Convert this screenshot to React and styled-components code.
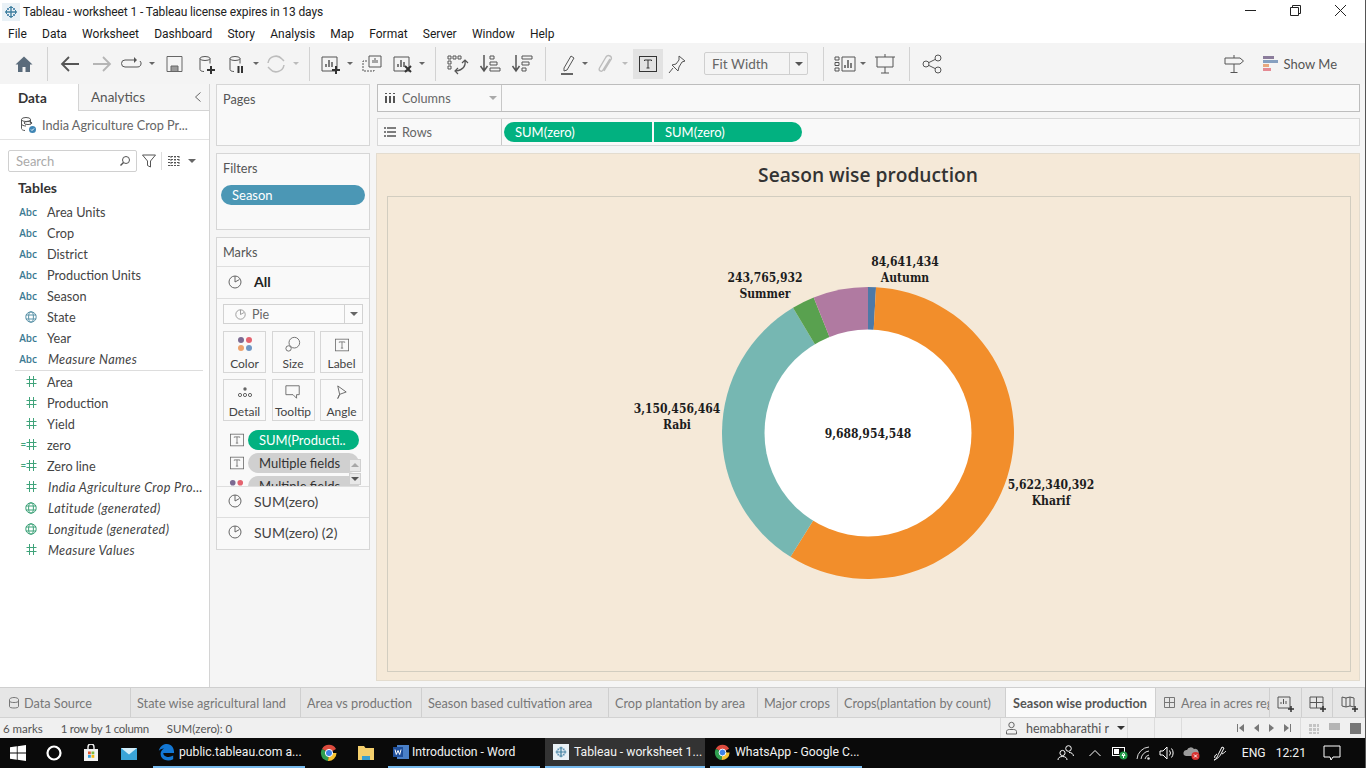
import React from 'react';
import styled, { createGlobalStyle } from 'styled-components';

const UI = 'Roboto, "Open Sans", "Liberation Sans", sans-serif';
const TB = 'Lato, "Open Sans", sans-serif';

const Global = createGlobalStyle`
  html, body { margin: 0; padding: 0; height: 100%; overflow: hidden; background: #fff; }
  * { box-sizing: border-box; }
  #root { height: 768px; }
`;

/* ---------- icons ---------- */
const Svg = styled.svg`
  display: block;
  flex: none;
  fill: none;
  stroke: ${(p) => p.$c || '#555'};
  stroke-width: 1;
`;

const Logo = ({ size = 18 }) => (
  <Svg $c="#3f7f9f" width={size} height={size} viewBox="0 0 18 18">
    <rect x="0" y="0" width="18" height="18" fill="#e9f1f6" stroke="none" />
    <path d="M9 3v12M3 9h12" strokeWidth="1.400" />
    <path d="M7 4.500h4M7 13.500h4M4.500 7v4M13.500 7v4" />
    <path d="M5 5h2v2H5zM11 5h2v2h-2zM5 11h2v2H5zM11 11h2v2h-2z" stroke="none" fill="#5f93b5" />
  </Svg>
);

const Home = () => (
  <Svg width="24" height="24" viewBox="0 0 24 24">
    <path d="M12 4.500 3.500 12.500H6V20h4.500v-5h3v5H18v-7.500h2.500z" fill="#5a6b7b" stroke="none" />
  </Svg>
);
const Back = () => (
  <Svg width="24" height="24" viewBox="0 0 24 24">
    <path d="M21 12H4M11 5l-7 7 7 7" strokeWidth="1.800" />
  </Svg>
);
const Forward = () => (
  <Svg $c="#b5b5b5" width="24" height="24" viewBox="0 0 24 24">
    <path d="M3 12h17M13 5l7 7-7 7" strokeWidth="1.800" />
  </Svg>
);
const Loop = () => (
  <Svg width="24" height="24" viewBox="0 0 24 24">
    <path d="M15 8H6a3.500 3.500 0 0 0 0 7h12a3.500 3.500 0 0 0 3-6" />
    <path d="M15 5l3 3-3 3" fill="#555" stroke="none" />
  </Svg>
);
const Save = () => (
  <Svg $c="#666" width="24" height="24" viewBox="0 0 24 24">
    <path d="M5 4.500h15v15H5z" />
    <path d="M9 19v-5h7v5" fill="#999" />
  </Svg>
);
const Db = ({ badge }) => (
  <Svg width="24" height="24" viewBox="0 0 24 24">
    <ellipse cx="11" cy="6.500" rx="5" ry="2" />
    <path d="M6 6.500v11c0 1 1.500 2 4 2M16 6.500v5" />
    {badge === 'plus' && <path d="M17 14v8M13 18h8" stroke="#333" strokeWidth="2" />}
    {badge === 'pause' && <path d="M14.500 14v7M18 14v7" stroke="#333" strokeWidth="2" />}
  </Svg>
);
const Refresh = () => (
  <Svg $c="#bdbdbd" width="24" height="24" viewBox="0 0 24 24">
    <path d="M4 11a8 8 0 0 1 14-4l2 2M20 13a8 8 0 0 1-14 4l-2-2" strokeWidth="1.500" />
  </Svg>
);
const Bars = ({ badge }) => (
  <Svg width="24" height="24" viewBox="0 0 24 24">
    <path d="M3 5h15v14H3z" />
    <path d="M7 15v-3M10 15V8M13 15v-5" strokeWidth="1.500" />
    {badge === 'plus' && <path d="M17 14v8M13 18h8" stroke="#333" strokeWidth="2" />}
    {badge === 'x' && <path d="M14 14l6 6M20 14l-6 6" stroke="#333" strokeWidth="2" />}
  </Svg>
);
const DupSheet = () => (
  <Svg width="24" height="24" viewBox="0 0 24 24">
    <path d="M9 4h12v11H9z" />
    <path d="M13 11V8M15 11V6M17 11V8" />
    <path d="M7 9H3v10h11v-2" strokeDasharray="2 1" />
  </Svg>
);
const Swap = () => (
  <Svg width="24" height="24" viewBox="0 0 24 24">
    <path d="M3 4h3v3H3zM8 4h3v3H8zM13 4h3v3h-3zM3 9h3v3H3zM3 14h3v3H3z" />
    <path d="M20 9c1 5-2 9-9 10M13 16l-3 3 3 3M17 11l3-3 3 3" strokeWidth="1.200" />
  </Svg>
);
const Sort = ({ desc }) => (
  <Svg width="24" height="24" viewBox="0 0 24 24">
    <path d="M6 3v15M2.500 14 6 19l3.500-5" strokeWidth="1.500" />
    {desc ? (
      <path d="M12 4h10v3H12zM12 10h7v3h-7zM12 16h4v3h-4z" />
    ) : (
      <path d="M12 4h4v3h-4zM12 10h7v3h-7zM12 16h10v3H12z" />
    )}
  </Svg>
);
const Pen = () => (
  <Svg width="24" height="24" viewBox="0 0 24 24">
    <path d="M8 16 15 4l3 2-7 12-3 1z" />
    <path d="M5 22h12" strokeWidth="1.800" />
  </Svg>
);
const Clip = () => (
  <Svg $c="#bdbdbd" width="24" height="24" viewBox="0 0 24 24">
    <path d="M17 7 10 18c-1.500 2.500-5 .5-3.500-2L13 5c2-3 7-.5 5 2.500L11 19" strokeWidth="1.400" />
  </Svg>
);
const TextBox = ({ small }) => (
  <Svg $c={small ? '#666' : '#333'} width={small ? 14 : 18} height={small ? 14 : 16} viewBox="0 0 18 16">
    <rect x="0.500" y="0.500" width="17" height="15" />
    <path d="M5.500 5V4h7v1M9 4v8M7.500 12h3" />
  </Svg>
);
const Pin = () => (
  <Svg width="24" height="24" viewBox="0 0 24 24">
    <path d="M14 4l6 5-3 1-3 5-1 4-6-6 4-1 3-4zM8 16l-4 5" />
  </Svg>
);
const ShowSheets = () => (
  <Svg width="24" height="24" viewBox="0 0 24 24">
    <path d="M2 5h4v3H2zM2 10.500h4v3H2zM2 16h4v3H2zM9 5h13v14H9z" />
    <path d="M12 16v-3M15 16V8M18 16v-5" strokeWidth="1.500" />
  </Svg>
);
const Present = () => (
  <Svg width="24" height="24" viewBox="0 0 24 24">
    <path d="M2 5h20M4 5v10h16V5M12 15v6M8 21h8M12 2v3" />
  </Svg>
);
const Share = () => (
  <Svg width="24" height="24" viewBox="0 0 24 24">
    <circle cx="6" cy="12" r="3" />
    <circle cx="18" cy="6" r="3" />
    <circle cx="18" cy="18" r="3" />
    <path d="M9 10.500 15 7.500M9 13.500l6 3" />
  </Svg>
);
const Guide = () => (
  <Svg width="22" height="24" viewBox="0 0 22 24">
    <path d="M2 6h15l3.500 3-3.500 3H2zM11 3v3M11 12v8M7.500 20.500h7" />
  </Svg>
);
const ShowMeIcon = () => (
  <Svg width="16" height="18" viewBox="0 0 16 18">
    <rect x="0" y="1" width="11" height="3" fill="#8b7c9b" stroke="none" />
    <rect x="0" y="5" width="15" height="3" fill="#86a0c0" stroke="none" />
    <rect x="0" y="9" width="6" height="3" fill="#e8a87e" stroke="none" />
    <rect x="0" y="13" width="8" height="3" fill="#e58a93" stroke="none" />
  </Svg>
);
const Chevron = () => (
  <Svg $c="#666" width="8" height="12" viewBox="0 0 8 12">
    <path d="M6.500 1.500 1.500 6l5 4.500" />
  </Svg>
);
const DataSource = () => (
  <Svg width="18" height="18" viewBox="0 0 18 18">
    <ellipse cx="7" cy="3.500" rx="4.500" ry="2" />
    <path d="M2.500 3.500v9c0 1 1.500 2 3.500 2M11.500 3.500v4M2.500 8c0 1 2 2 4.500 2" />
    <ellipse cx="9" cy="7" rx="4" ry="1.500" />
    <circle cx="13.500" cy="13.500" r="3.500" fill="#3f86b5" stroke="none" />
    <path d="M12 13.500l1 1 2-2" stroke="#fff" />
  </Svg>
);
const Magnifier = () => (
  <Svg width="12" height="12" viewBox="0 0 12 12">
    <circle cx="7" cy="5" r="3.500" />
    <path d="M4.500 7.500 1.500 10.500" strokeWidth="1.400" />
  </Svg>
);
const Funnel = () => (
  <Svg width="14" height="14" viewBox="0 0 14 14">
    <path d="M.5 1h13L8.500 7v6l-3-1.500V7z" />
  </Svg>
);
const ViewList = () => (
  <Svg width="12" height="10" viewBox="0 0 12 10">
    <path d="M0 .5h12M0 3.500h12M0 6.500h12M0 9.500h12M3 0v10M7 0v10M11 0v10" strokeDasharray="2 1" />
  </Svg>
);
const Globe = ({ c = '#5b93a8' }) => (
  <Svg $c={c} width="12" height="12" viewBox="0 0 12 12">
    <circle cx="6" cy="6" r="5.200" />
    <ellipse cx="6" cy="6" rx="2.400" ry="5.200" />
    <path d="M.8 4h10.400M.8 8h10.400" />
  </Svg>
);
const Hash = () => (
  <Svg $c="#3fa37a" width="11" height="11" viewBox="0 0 11 11">
    <path d="M3.500 0v11M7.500 0v11M.5 3.500h10M.5 7.500h10" />
  </Svg>
);
const PieGlyph = ({ c = '#666', size = 14 }) => (
  <Svg $c={c} width={size} height={size} viewBox="0 0 14 14">
    <circle cx="7" cy="7" r="6" />
    <path d="M7 7V1M7 7l4.500-2.500" />
  </Svg>
);
const Dots = ({ size = 16 }) => (
  <Svg width={size} height={size} viewBox="0 0 16 16">
    <circle cx="4" cy="4" r="3" fill="#7c6a92" stroke="none" />
    <circle cx="12" cy="4" r="3" fill="#e4636f" stroke="none" />
    <circle cx="4" cy="12" r="3" fill="#eda26c" stroke="none" />
    <circle cx="12" cy="12" r="3" fill="#6f97c5" stroke="none" />
  </Svg>
);
const SizeIcon = () => (
  <Svg $c="#666" width="16" height="16" viewBox="0 0 18 18">
    <circle cx="10.500" cy="7.500" r="6" />
    <circle cx="4" cy="14" r="3" fill="#fafafa" />
  </Svg>
);
const DetailIcon = () => (
  <Svg $c="#666" width="16" height="16" viewBox="0 0 16 16">
    <circle cx="8" cy="5" r="1.700" fill="#666" stroke="none" />
    <circle cx="3" cy="11" r="1.600" />
    <circle cx="8" cy="11" r="1.600" />
    <circle cx="13" cy="11" r="1.600" />
  </Svg>
);
const TooltipIcon = () => (
  <Svg $c="#666" width="16" height="16" viewBox="0 0 18 18">
    <path d="M1 2h15v10h-3v4l-4-4H1z" />
  </Svg>
);
const AngleIcon = () => (
  <Svg $c="#666" width="15" height="16" viewBox="0 0 16 16">
    <path d="M4 1.500 13 8l-7 2.500L4 15 6 10.500z" />
  </Svg>
);
const UserIcon = () => (
  <Svg $c="#666" width="11" height="14" viewBox="0 0 11 14">
    <circle cx="5.500" cy="4" r="2.700" />
    <path d="M.5 13v-2.500c0-1 1-2 3-2h4c2 0 3 1 3 2V13z" />
  </Svg>
);
const Grid4 = () => (
  <Svg width="18" height="18" viewBox="0 0 18 18">
    <path d="M2 3h13v11H2zM8.500 3v11M2 8.500h13" />
    <path d="M15 12v6M12 15h6" stroke="#333" strokeWidth="1.500" />
  </Svg>
);
const NewSheet = () => (
  <Svg width="18" height="18" viewBox="0 0 18 18">
    <path d="M2 3h12v11H2z" />
    <path d="M5 10V8M7.500 10V5M10 10V7" />
    <path d="M15 12v6M12 15h6" stroke="#333" strokeWidth="1.500" />
  </Svg>
);
const NewStory = () => (
  <Svg width="18" height="18" viewBox="0 0 18 18">
    <path d="M2 3l4 1 4-1 4 1v9l-4-1-4 1-4-1zM6 4v9M10 3v9" />
    <path d="M15 12v6M12 15h6" stroke="#333" strokeWidth="1.500" />
  </Svg>
);
const WinLogo = () => (
  <Svg width="16" height="16" viewBox="0 0 16 16">
    <path d="M0 2.300 6.800 1.300v6.200H0zM7.600 1.200 16 0v7.500H7.600zM0 8.400h6.800v6.300L0 13.700zM7.600 8.400H16V16l-8.400-1.200z" fill="#fff" stroke="none" />
  </Svg>
);
const Cortana = () => (
  <Svg $c="#fff" width="16" height="16" viewBox="0 0 16 16">
    <circle cx="8" cy="8" r="6.500" strokeWidth="2.200" />
  </Svg>
);
const Store = () => (
  <Svg width="18" height="18" viewBox="0 0 18 18">
    <path d="M2 5h14v12H2z" fill="#f2f2f2" stroke="none" />
    <path d="M6 5V3a3 3 0 0 1 6 0v2" stroke="#f2f2f2" strokeWidth="1.400" />
    <rect x="6" y="7.500" width="2.800" height="2.800" fill="#e2552c" stroke="none" />
    <rect x="9.500" y="7.500" width="2.800" height="2.800" fill="#7eb93f" stroke="none" />
    <rect x="6" y="11" width="2.800" height="2.800" fill="#2d9fe0" stroke="none" />
    <rect x="9.500" y="11" width="2.800" height="2.800" fill="#f2b80f" stroke="none" />
  </Svg>
);
const Mail = () => (
  <Svg width="18" height="16" viewBox="0 0 18 16">
    <path d="M1 3h16v12H1z" fill="#3aa4d8" stroke="none" />
    <path d="M1 3h16L9 9.500z" fill="#d3eefa" stroke="none" />
  </Svg>
);
const Edge = () => (
  <Svg width="18" height="18" viewBox="0 0 20 20">
    <path d="M2 9C3 3 8 1 11 1c5 0 8 4 8 10H7c0 4 6 6 11 3v4c-6 3-14 1-14-6 0-3 2-5 4-6-3 0-5 1-6 3z" fill="#1377d4" stroke="none" />
  </Svg>
);
const ChromeIcon = ({ size = 17 }) => (
  <Svg width={size} height={size} viewBox="0 0 18 18">
    <path d="M9 9 2 5a8 8 0 0 1 14 0z" fill="#dd4b3e" stroke="none" />
    <path d="M9 9 2 5a8 8 0 0 0 6 12z" fill="#2f9e4f" stroke="none" />
    <path d="M9 9h7.500A8 8 0 0 1 8 17z" fill="#f6c230" stroke="none" />
    <circle cx="9" cy="9" r="3.600" fill="#3f83e8" stroke="#fff" />
  </Svg>
);
const Folder = () => (
  <Svg width="18" height="16" viewBox="0 0 18 16">
    <path d="M1 1h6l1.500 2H17v12H1z" fill="#f4cf6d" stroke="none" />
    <path d="M5 15v-4h8v4" fill="#3a9fd0" stroke="none" />
  </Svg>
);
const WordIcon = () => (
  <Svg width="16" height="16" viewBox="0 0 16 16">
    <rect x="4" y="1" width="12" height="14" fill="#4a80c8" stroke="none" />
    <rect x="0" y="3" width="10" height="10" fill="#1f4f9b" stroke="none" />
    <path d="M2 5.500l1.300 5 1.700-4 1.700 4L8 5.500" stroke="#fff" />
  </Svg>
);
const People = () => (
  <Svg $c="#fff" width="18" height="16" viewBox="0 0 18 16">
    <circle cx="5.500" cy="8" r="2.600" />
    <path d="M1 15c0-2 1.500-3.500 4.500-3.500S10 13 10 15" />
    <circle cx="11.500" cy="3.500" r="2.800" />
    <path d="M12 7.500c2.500 0 4 1 4.500 3.500" />
  </Svg>
);
const Up = () => (
  <Svg $c="#fff" width="12" height="8" viewBox="0 0 12 8">
    <path d="M.5 7l5.500-5.500L11.500 7" />
  </Svg>
);
const Battery = () => (
  <Svg width="16" height="14" viewBox="0 0 16 14">
    <rect x=".5" y="1.500" width="12" height="8" stroke="#fff" />
    <rect x="2" y="3" width="5" height="5" fill="#fff" stroke="none" />
    <circle cx="11.500" cy="9.500" r="4" fill="#1f9a46" stroke="none" />
    <path d="M11.500 7l-1.500 2.500h3zM11.500 9v3" stroke="#fff" />
  </Svg>
);
const Wifi = () => (
  <Svg $c="#ddd" width="16" height="14" viewBox="0 0 16 14">
    <path d="M13 1A13 13 0 0 0 1 13M13 5a9 9 0 0 0-8 8M13 9a5 5 0 0 0-4 4" />
    <circle cx="12.500" cy="12.500" r="1.300" fill="#ddd" stroke="none" />
  </Svg>
);
const Speaker = () => (
  <Svg $c="#fff" width="17" height="14" viewBox="0 0 17 14">
    <path d="M1 5h3l4-4v12L4 9H1zM10.500 4.500a4 4 0 0 1 0 5M12.500 2.500a7 7 0 0 1 0 9" />
  </Svg>
);
const Cloud = () => (
  <Svg width="18" height="16" viewBox="0 0 18 16">
    <path d="M3 11a3 3 0 0 1 1-6 4 4 0 0 1 7-1 3 3 0 0 1 2 7z" fill="#9b9b9b" stroke="none" />
    <circle cx="12.500" cy="11" r="4" fill="#d8322f" stroke="none" />
    <path d="M11 9.500l3 3M14 9.500l-3 3" stroke="#fff" />
  </Svg>
);
const Stylus = () => (
  <Svg $c="#fff" width="16" height="18" viewBox="0 0 16 18">
    <path d="M2 16c2 0 3-3 5-7l3-6 2 1-3 6c-2 4-5 5-7 6zM10 10c2-1 3-2 4-3M5 10C3 11 2 13 3 14" />
  </Svg>
);
const Notif = () => (
  <Svg $c="#fff" width="18" height="16" viewBox="0 0 18 16">
    <path d="M1 1h16v11H10l-2 3-1-3H1z" />
  </Svg>
);

/* ---------- window chrome ---------- */
const Shell = styled.div`
  width: 1366px;
  height: 768px;
  display: flex;
  flex-direction: column;
  overflow: hidden;
  font-family: ${TB};
  color: #444;
  border-right: 1px solid #555;
`;
const TitleBar = styled.div`
  height: 24px;
  display: flex;
  align-items: center;
  padding-left: 2px;
  gap: 3px;
  background: #fff;
  color: #222;
  font: 12px ${UI};
  letter-spacing: -0.12px;
`;
const WinButtons = styled.div`
  margin-left: auto;
  align-self: flex-start;
  display: flex;
  align-items: center;
  height: 20px;
  padding-right: 19px;
  gap: 34px;
`;
const MenuBar = styled.div`
  height: 19px;
  display: flex;
  align-items: center;
  padding-left: 8px;
  background: #fff;
  color: #1a1a1a;
  font: 12px ${UI};
`;
const MenuItem = styled.span`
  margin-right: 15.200px;
`;

const ToolBar = styled.div`
  height: 41px;
  display: flex;
  align-items: center;
  padding-left: 12px;
  background: #f4f4f4;
`;
const Tool = styled.div`
  flex: none;
  display: flex;
  align-items: center;
  justify-content: center;
  width: ${(p) => p.$w || 24}px;
  height: ${(p) => (p.$active ? 30 : 24)}px;
  margin-left: ${(p) => p.$gap || 0}px;
  background: ${(p) => (p.$active ? '#e2e2e2' : 'transparent')};
`;
// 6px wide + 1px margins: takes 8px of the toolbar row
const Caret = styled.i`
  flex: none;
  display: block;
  width: 0;
  height: 0;
  margin-left: ${(p) => (p.$gap || 0) + (p.$flat ? 0 : 1)}px;
  margin-right: ${(p) => (p.$flat ? 0 : 1)}px;
  border-left: ${(p) => p.$s || 3}px solid transparent;
  border-right: ${(p) => p.$s || 3}px solid transparent;
  border-top: ${(p) => p.$s || 3}px solid ${(p) => p.$c || '#666'};
`;
const ToolSep = styled.div`
  flex: none;
  width: 1px;
  height: 34px;
  margin-left: ${(p) => p.$gap || 0}px;
  background: #d2d2d2;
`;
const FitSelect = styled.div`
  flex: none;
  width: 104px;
  height: 23px;
  margin-left: ${(p) => p.$gap || 0}px;
  display: flex;
  align-items: center;
  border: 1px solid #cfcfcf;
  border-radius: 2px;
  font-size: 13.500px;
  color: #666;
  padding-left: 7px;
  span { flex: 1; }
`;
const FitArrow = styled.div`
  width: 18px;
  height: 100%;
  border-left: 1px solid #cfcfcf;
  display: flex;
  align-items: center;
  justify-content: center;
`;
const ShowMe = styled.div`
  margin-left: auto;
  padding-right: 28px;
  display: flex;
  align-items: center;
  gap: 5px;
  font-size: 13px;
  color: #555;
`;
const GuideSlot = styled.div`
  margin-right: 13px;
`;

/* ---------- main ---------- */
const Main = styled.div`
  flex: 1;
  min-height: 0;
  display: grid;
  grid-template-columns: 210px 166px 1fr;
  background: #f5f5f5;
`;
const DataPane = styled.div`
  background: #fff;
  border-right: 1px solid #d4d4d4;
  display: flex;
  flex-direction: column;
`;
const PaneTabs = styled.div`
  height: 27px;
  display: flex;
  font-size: 13.500px;
`;
const DataTab = styled.div`
  width: 78px;
  padding-left: 18px;
  display: flex;
  align-items: center;
  font-weight: 700;
  color: #333;
`;
const AnalyticsTab = styled.div`
  flex: 1;
  display: flex;
  align-items: center;
  justify-content: space-between;
  padding: 0 7px 0 12px;
  color: #555;
  background: #f5f5f5;
  border-left: 1px solid #d4d4d4;
  border-bottom: 1px solid #d4d4d4;
`;
const SourceRow = styled.div`
  height: 29px;
  display: flex;
  align-items: center;
  gap: 5px;
  padding-left: 19px;
  font-size: 12.700px;
  color: #666;
  border-bottom: 1px solid #e3e3e3;
`;
const SearchRow = styled.div`
  height: 33px;
  display: flex;
  align-items: center;
  padding: 8px 0 0 8px;
`;
const SearchBox = styled.div`
  width: 129px;
  height: 22px;
  display: flex;
  align-items: center;
  justify-content: space-between;
  padding: 0 5px 0 7px;
  border: 1px solid #d0d0d0;
  border-radius: 2px;
  font-size: 13px;
  color: #aaa;
`;
const FilterSlot = styled.div`
  margin-left: 5px;
  padding-right: 5px;
  height: 18px;
  display: flex;
  align-items: center;
  border-right: 1px solid #ddd;
`;
const ViewSlot = styled.div`
  margin-left: 6px;
  display: flex;
  align-items: center;
  gap: 8px;
`;
const TablesHead = styled.div`
  height: 28px;
  display: flex;
  align-items: center;
  padding-left: 18px;
  font-size: 14px;
  font-weight: 700;
  color: #333;
`;
const Field = styled.div`
  height: 21px;
  display: flex;
  align-items: center;
  font-size: 12.700px;
  color: #444;
  font-style: ${(p) => (p.$it ? 'italic' : 'normal')};
  letter-spacing: ${(p) => (p.$it ? '0.35px' : '0')};
  white-space: nowrap;
`;
const FieldIcon = styled.div`
  width: 47px;
  padding-right: 10px;
  display: flex;
  justify-content: flex-end;
  align-items: center;
  font: normal 600 10px "Open Sans", sans-serif;
  letter-spacing: 0;
  color: #3b7a92;
`;
const Equal = styled.span`
  font-size: 9px;
  font-weight: 700;
  color: #3fa37a;
`;
const FieldName = styled.span`
  padding-left: ${(p) => (p.$it ? 1 : 0)}px;
`;
const FieldSep = styled.div`
  height: 1px;
  margin: 1px 6px 0 15px;
  background: #ddd;
`;

const Shelves = styled.div`
  padding: 0 6px;
  display: flex;
  flex-direction: column;
  gap: 7px;
`;
const Card = styled.div`
  flex: none;
  background: #f9f9f9;
  border: 1px solid #d6d6d6;
  height: ${(p) => p.$h}px;
`;
const CardHead = styled.div`
  height: 28px;
  display: flex;
  align-items: center;
  padding-left: 6px;
  font-size: 12.700px;
  color: #555;
`;
const Pill = styled.div`
  display: flex;
  align-items: center;
  height: 20px;
  border-radius: 10px;
  padding-left: 11px;
  color: ${(p) => p.$fg || '#fff'};
  background: ${(p) => p.$bg};
  font-size: 13px;
  white-space: nowrap;
`;
const FilterPill = styled(Pill)`
  margin: 3px 4px 0;
`;
const MarkRow = styled.div`
  height: ${(p) => p.$h || 31}px;
  display: flex;
  align-items: center;
  padding: 0 0 ${(p) => (p.$h === 1 ? 0 : 2)}px 11px;
  gap: 12px;
  border-top: 1px solid #dedede;
  font-size: 14px;
  font-weight: ${(p) => (p.$bold ? 700 : 400)};
  color: ${(p) => (p.$bold ? '#222' : '#444')};
`;
const MarkType = styled.div`
  height: 20px;
  margin: 5px 6px 7px;
  display: flex;
  align-items: center;
  padding-left: 11px;
  gap: 6px;
  border: 1px solid #d2d2d2;
  background: #fbfbfb;
  font-size: 12.500px;
  color: #666;
`;
const TypeCaret = styled.div`
  margin-left: auto;
  width: 18px;
  height: 100%;
  border-left: 1px solid #d2d2d2;
  display: flex;
  align-items: center;
  justify-content: center;
`;
const MarkGrid = styled.div`
  margin: 0 6px;
  display: grid;
  grid-template-columns: repeat(3, 43px);
  grid-auto-rows: 42px;
  gap: 6px 5.500px;
`;
const MarkBtn = styled.div`
  display: flex;
  flex-direction: column;
  align-items: center;
  justify-content: flex-end;
  gap: 4px;
  padding-bottom: 1px;
  border: 1px solid #d6d6d6;
  font-size: 12px;
  color: #444;
`;
const PillList = styled.div`
  position: relative;
  height: 56px;
  margin-top: 9px;
  padding-left: 12px;
  overflow: hidden;
  display: flex;
  flex-direction: column;
  gap: 3px;
`;
const PillRow = styled.div`
  display: flex;
  align-items: center;
  gap: 4px;
`;
const EncIcon = styled.div`
  width: 15px;
  display: flex;
  justify-content: center;
`;
const MarkPill = styled(Pill)`
  width: ${(p) => p.$w}px;
`;
const ScrollBar = styled.div`
  position: absolute;
  right: 8px;
  top: 29px;
  width: 12px;
  height: 26px;
  display: flex;
  flex-direction: column;
  gap: 1px;
`;
const ScrollBtn = styled.div`
  flex: 1;
  display: flex;
  align-items: center;
  justify-content: center;
  background: #e8e8e8;
  border: 1px solid #d0d0d0;
`;
const ArrowUp = styled.i`
  width: 0;
  height: 0;
  border-left: 4px solid transparent;
  border-right: 4px solid transparent;
  border-bottom: 4px solid #a8a8a8;
`;

const Workspace = styled.div`
  padding: 0 5px 6px 0;
  display: flex;
  flex-direction: column;
  min-height: 0;
`;
const Shelf = styled.div`
  flex: none;
  height: ${(p) => p.$h}px;
  margin: 0 0 6px 1px;
  display: flex;
  background: #f9f9f9;
  border: 1px solid ${(p) => (p.$strong ? '#bdbdbd' : '#d8d8d8')};
`;
const ShelfLabel = styled.div`
  width: 124px;
  display: flex;
  align-items: center;
  gap: 6px;
  padding: 0 4px 0 6px;
  border-right: 1px solid #c8c8c8;
  font-size: 12.700px;
  color: #666;
  span { flex: 1; }
`;
const ShelfPills = styled.div`
  display: flex;
  align-items: center;
  gap: 2px;
  padding-left: 2px;
`;
const ShelfPill = styled.div`
  width: ${(p) => p.$w}px;
  height: 20px;
  display: flex;
  align-items: center;
  padding-left: 11px;
  color: #fff;
  font-size: 13px;
  background: #02b180;
  border-radius: ${(p) => (p.$first ? '10px 0 0 10px' : '0 10px 10px 0')};
`;
const Viewer = styled.div`
  flex: 1;
  min-height: 0;
  margin-top: 1px;
  display: flex;
  flex-direction: column;
  background: #f5e9d8;
  border: 1px solid #e3dccf;
  padding: 0 8px 8px 10px;
`;
const ChartTitle = styled.div`
  height: 42px;
  padding: 0 2px 2px 0;
  display: flex;
  align-items: center;
  justify-content: center;
  font-family: "Open Sans", sans-serif;
  font-weight: 600;
  font-size: 19.200px;
  color: #333;
`;
const ChartFrame = styled.div`
  flex: 1;
  min-height: 0;
  border: 1px solid #d2cdc0;
`;
const ChartSvg = styled.svg`
  display: block;
  width: 100%;
  height: 100%;
`;
const Lbl = styled.text`
  font-family: "DejaVu Serif", "Liberation Serif", serif;
  font-stretch: condensed;
  font-weight: 700;
  font-size: 12px;
  fill: #1c1c1c;
  text-anchor: middle;
`;

/* ---------- bottom ---------- */
const TabBar = styled.div`
  height: 31px;
  display: flex;
  background: #e6e6e6;
  border-top: 1px solid #cfcfcf;
  border-bottom: 1px solid #d2d2d2;
`;
const SheetTab = styled.div`
  flex: none;
  width: ${(p) => p.$w}px;
  display: flex;
  align-items: center;
  gap: ${(p) => p.$g || 6}px;
  padding-left: ${(p) => p.$pl || 6}px;
  overflow: hidden;
  white-space: nowrap;
  font-size: 12.700px;
  font-weight: ${(p) => (p.$active ? 700 : 400)};
  color: ${(p) => (p.$active ? '#555' : '#777')};
  background: ${(p) => (p.$active ? '#fafafa' : 'transparent')};
  border-right: 1px solid #cfcfcf;
`;
const AddTab = styled.div`
  flex: 1;
  display: flex;
  align-items: center;
  justify-content: center;
  border-right: 1px solid #cfcfcf;
`;
const StatusBar = styled.div`
  height: 20px;
  display: flex;
  align-items: center;
  background: #f0f0f0;
  font-size: 11.500px;
  color: #555;
  padding-left: 3px;
`;
const StatusText = styled.span`
  margin-right: 18px;
  white-space: nowrap;
  letter-spacing: ${(p) => (p.$tight ? '-0.3px' : '0')};
`;
const StatusCell = styled.div`
  flex: none;
  width: ${(p) => p.$w}px;
  height: 100%;
  display: flex;
  align-items: center;
  gap: 9px;
  padding-left: ${(p) => p.$pl || 0}px;
  border-left: 1px solid #dcdcdc;
  font-size: 12.500px;
  white-space: nowrap;
`;
const UserCell = styled(StatusCell)`
  margin-left: auto;
`;
const Nav = styled.div`
  flex: none;
  width: 72px;
  display: flex;
  align-items: center;
  padding-left: 9px;
  gap: 10px;
`;
const TriL = styled.i`
  width: 0;
  height: 0;
  border-top: 4px solid transparent;
  border-bottom: 4px solid transparent;
  border-right: 5px solid #777;
`;
const TriR = styled(TriL)`
  border-right: none;
  border-left: 5px solid #777;
`;
const NavEnd = styled.div`
  display: flex;
  align-items: center;
  gap: 1px;
  &::${(p) => (p.$right ? 'after' : 'before')} {
    content: '';
    width: 1px;
    height: 8px;
    background: #777;
  }
`;
const Views = styled.div`
  flex: none;
  display: flex;
  align-items: center;
  gap: 10px;
  padding: 0 4px 0 7px;
  height: 100%;
  border-left: 1px solid #dcdcdc;
`;
const ViewThumb = styled.div`
  width: 11px;
  height: 11px;
  background-color: ${(p) => p.$c};
  background-image: ${(p) => p.$img || 'none'};
  background-size: ${(p) => p.$size || 'auto'};
`;
const gridDots = 'linear-gradient(#f0f0f0 1px, transparent 1px), linear-gradient(90deg, #f0f0f0 1px, transparent 1px)';

const TaskBar = styled.div`
  height: 30px;
  display: flex;
  align-items: stretch;
  background: #0a0a0a;
  color: #f2f2f2;
  font: 12.200px ${UI};
`;
const TaskIcon = styled.div`
  flex: none;
  width: ${(p) => p.$w}px;
  margin-left: ${(p) => p.$gap || 0}px;
  display: flex;
  align-items: center;
  justify-content: center;
`;
const TaskApp = styled.div`
  flex: none;
  width: ${(p) => p.$w}px;
  margin-left: ${(p) => p.$gap || 0}px;
  display: flex;
  align-items: center;
  gap: ${(p) => p.$g || 4}px;
  padding-left: ${(p) => p.$pl || 4}px;
  white-space: nowrap;
  background: ${(p) => (p.$active ? '#333' : 'transparent')};
  border-bottom: 2px solid #76b9ed;
`;
const Tray = styled.div`
  margin-left: auto;
  display: flex;
  align-items: center;
  padding-right: 24px;
`;
const TrayItem = styled.div`
  margin-left: ${(p) => p.$gap}px;
  display: flex;
  align-items: center;
`;

/* ---------- data ---------- */
const dims = ['Area Units', 'Crop', 'District', 'Production Units', 'Season', 'State', 'Year', 'Measure Names'];
const meas = [
  ['Area', 'hash'],
  ['Production', 'hash'],
  ['Yield', 'hash'],
  ['zero', 'calc'],
  ['Zero line', 'calc'],
  ['India Agriculture Crop Pro...', 'hash', true],
  ['Latitude (generated)', 'globe', true],
  ['Longitude (generated)', 'globe', true],
  ['Measure Values', 'hash', true],
];
const slices = [
  { v: 84641434, c: '#4e79a7' },
  { v: 5622340392, c: '#f28e2b' },
  { v: 3150456464, c: '#76b7b2' },
  { v: 243765932, c: '#59a14f' },
  { v: 587750326, c: '#b07aa1' },
];
const labels = [
  [905, 262, '84,641,434', 'Autumn'],
  [765, 278, '243,765,932', 'Summer'],
  [677, 409, '3,150,456,464', 'Rabi'],
  [1051, 485, '5,622,340,392', 'Kharif'],
];
const tabs = [
  ['State wise agricultural land', 170],
  ['Area vs production', 121],
  ['Season based cultivation area', 187],
  ['Crop plantation by area', 149],
  ['Major crops', 80],
  ['Crops(plantation by count)', 168],
];

function slicePath(a0, a1, R) {
  const x0 = Math.sin(a0) * R;
  const y0 = -Math.cos(a0) * R;
  const x1 = Math.sin(a1) * R;
  const y1 = -Math.cos(a1) * R;
  return `M0 0L${x0} ${y0}A${R} ${R} 0 ${a1 - a0 > Math.PI ? 1 : 0} 1 ${x1} ${y1}Z`;
}

const Donut = () => {
  const total = slices.reduce((s, d) => s + d.v, 0);
  let a = 0;
  // frame content starts at 388,197 on the page
  return (
    <ChartSvg viewBox="0 0 962 474">
      <g transform="translate(480 236)">
        {slices.map((d) => {
          const a0 = a;
          a += (d.v / total) * Math.PI * 2;
          return <path key={d.c} d={slicePath(a0, a, 146)} fill={d.c} />;
        })}
        <circle r="103.500" fill="#fff" />
        <Lbl x="0" y="5">9,688,954,548</Lbl>
      </g>
      {labels.map(([x, y, n, name]) => (
        <g key={name} transform={`translate(${x - 388} ${y - 197})`}>
          <Lbl y="4">{n}</Lbl>
          <Lbl y="20">{name}</Lbl>
        </g>
      ))}
    </ChartSvg>
  );
};

const App = () => (
  <Shell>
    <Global />
    <TitleBar>
      <Logo />
      <span>Tableau - worksheet 1 - Tableau license expires in 13 days</span>
      <WinButtons>
        <Svg $c="#222" width="11" height="11" viewBox="0 0 11 11"><path d="M0 5.500h11" /></Svg>
        <Svg $c="#222" width="11" height="11" viewBox="0 0 11 11"><path d="M.5 2.500h8v8h-8zM2.500 2.500v-2h8v8h-2" /></Svg>
        <Svg $c="#222" width="11" height="11" viewBox="0 0 11 11"><path d="M0 0l11 11M11 0 0 11" /></Svg>
      </WinButtons>
    </TitleBar>
    <MenuBar>
      {['File', 'Data', 'Worksheet', 'Dashboard', 'Story', 'Analysis', 'Map', 'Format', 'Server', 'Window', 'Help'].map((m) => (
        <MenuItem key={m}>{m}</MenuItem>
      ))}
    </MenuBar>

    <ToolBar>
      <Tool><Home /></Tool>
      <ToolSep $gap={11} />
      <Tool $gap={10}><Back /></Tool>
      <Tool $gap={8}><Forward /></Tool>
      <Tool $gap={5}><Loop /></Tool>
      <Caret $gap={5} />
      <Tool $gap={6}><Save /></Tool>
      <Tool $gap={8}><Db badge="plus" /></Tool>
      <Tool $gap={6}><Db badge="pause" /></Tool>
      <Caret $gap={4} />
      <Tool $gap={4}><Refresh /></Tool>
      <Caret $gap={4} $c="#bbb" />
      <ToolSep $gap={9} />
      <Tool $gap={9}><Bars badge="plus" /></Tool>
      <Caret $gap={3} />
      <Tool $gap={6}><DupSheet /></Tool>
      <Tool $gap={7}><Bars badge="x" /></Tool>
      <Caret $gap={3} />
      <ToolSep $gap={9} />
      <Tool $gap={9}><Swap /></Tool>
      <Tool $gap={9}><Sort /></Tool>
      <Tool $gap={8}><Sort desc /></Tool>
      <ToolSep $gap={11} />
      <Tool $gap={10}><Pen /></Tool>
      <Caret $gap={1} />
      <Tool $gap={4}><Clip /></Tool>
      <Caret $gap={4} $c="#bbb" />
      <Tool $gap={4} $w={30} $active><TextBox /></Tool>
      <Tool $gap={2}><Pin /></Tool>
      <FitSelect $gap={15}>
        <span>Fit Width</span>
        <FitArrow><Caret $flat $s={4} $c="#555" /></FitArrow>
      </FitSelect>
      <ToolSep $gap={15} />
      <Tool $gap={9}><ShowSheets /></Tool>
      <Caret $gap={2} />
      <Tool $gap={6}><Present /></Tool>
      <ToolSep $gap={12} />
      <Tool $gap={10}><Share /></Tool>
      <ShowMe>
        <GuideSlot><Guide /></GuideSlot>
        <ShowMeIcon />
        <span>Show Me</span>
      </ShowMe>
    </ToolBar>

    <Main>
      <DataPane>
        <PaneTabs>
          <DataTab>Data</DataTab>
          <AnalyticsTab>Analytics<Chevron /></AnalyticsTab>
        </PaneTabs>
        <SourceRow><DataSource />India Agriculture Crop Pr...</SourceRow>
        <SearchRow>
          <SearchBox>Search<Magnifier /></SearchBox>
          <FilterSlot><Funnel /></FilterSlot>
          <ViewSlot><ViewList /><Caret $flat $s={4} /></ViewSlot>
        </SearchRow>
        <TablesHead>Tables</TablesHead>
        {dims.map((d) => (
          <Field key={d} $it={d === 'Measure Names'}>
            <FieldIcon>{d === 'State' ? <Globe /> : 'Abc'}</FieldIcon>
            <FieldName $it={d === 'Measure Names'}>{d}</FieldName>
          </Field>
        ))}
        <FieldSep />
        {meas.map(([name, kind, it]) => (
          <Field key={name} $it={it}>
            <FieldIcon>
              {kind === 'calc' && <Equal>=</Equal>}
              {kind === 'globe' ? <Globe c="#3fa37a" /> : <Hash />}
            </FieldIcon>
            <FieldName $it={it}>{name}</FieldName>
          </Field>
        ))}
      </DataPane>

      <Shelves>
        <Card $h={62}><CardHead>Pages</CardHead></Card>
        <Card $h={77}>
          <CardHead>Filters</CardHead>
          <FilterPill $bg="#4b97b5">Season</FilterPill>
        </Card>
        <Card $h={313}>
          <CardHead>Marks</CardHead>
          <MarkRow $bold $h={32}><PieGlyph />All</MarkRow>
          <MarkRow $h={1} />
          <MarkType>
            <PieGlyph c="#888" size={11} />Pie
            <TypeCaret><Caret $flat $s={4} /></TypeCaret>
          </MarkType>
          <MarkGrid>
            <MarkBtn><Dots />Color</MarkBtn>
            <MarkBtn><SizeIcon />Size</MarkBtn>
            <MarkBtn><TextBox small />Label</MarkBtn>
            <MarkBtn><DetailIcon />Detail</MarkBtn>
            <MarkBtn><TooltipIcon />Tooltip</MarkBtn>
            <MarkBtn><AngleIcon />Angle</MarkBtn>
          </MarkGrid>
          <PillList>
            <PillRow>
              <EncIcon><TextBox small /></EncIcon>
              <MarkPill $bg="#02b180" $w={111}>SUM(Producti..</MarkPill>
            </PillRow>
            <PillRow>
              <EncIcon><TextBox small /></EncIcon>
              <MarkPill $bg="#d0d0d0" $fg="#333" $w={111}>Multiple fields</MarkPill>
            </PillRow>
            <PillRow>
              <EncIcon><Dots size={15} /></EncIcon>
              <MarkPill $bg="#d0d0d0" $fg="#333" $w={111}>Multiple fields</MarkPill>
            </PillRow>
            <ScrollBar>
              <ScrollBtn><ArrowUp /></ScrollBtn>
              <ScrollBtn><Caret $flat $s={4} $c="#555" /></ScrollBtn>
            </ScrollBar>
          </PillList>
          <MarkRow><PieGlyph />SUM(zero)</MarkRow>
          <MarkRow><PieGlyph />SUM(zero) (2)</MarkRow>
        </Card>
      </Shelves>

      <Workspace>
        <Shelf $h={28} $strong>
          <ShelfLabel>
            <Svg $c="#555" width="12" height="12" viewBox="0 0 12 12"><path d="M2 4v7M6 4v7M10 4v7M2 1v1M6 1v1M10 1v1" strokeWidth="2" /></Svg>
            <span>Columns</span>
            <Caret $flat $s={4} $c="#aaa" />
          </ShelfLabel>
        </Shelf>
        <Shelf $h={28}>
          <ShelfLabel>
            <Svg $c="#555" width="12" height="12" viewBox="0 0 12 12"><path d="M0 2h2M3 2h9M0 6h2M3 6h9M0 10h2M3 10h9" strokeWidth="1.500" /></Svg>
            <span>Rows</span>
          </ShelfLabel>
          <ShelfPills>
            <ShelfPill $w={148} $first>SUM(zero)</ShelfPill>
            <ShelfPill $w={148}>SUM(zero)</ShelfPill>
          </ShelfPills>
        </Shelf>
        <Viewer>
          <ChartTitle>Season wise production</ChartTitle>
          <ChartFrame><Donut /></ChartFrame>
        </Viewer>
      </Workspace>
    </Main>

    <TabBar>
      <SheetTab $w={131} $pl={9} $g={5}>
        <Svg $c="#777" width="10" height="12" viewBox="0 0 10 12"><path d="M.5 2.500v7c0 1 2 1.500 4.500 1.500s4.500-.5 4.500-1.500v-7M.5 2.500c0-1 2-2 4.500-2s4.500 1 4.500 2M.5 4c0 1 2 1.500 4.500 1.500S9.500 5 9.500 4" /></Svg>
        Data Source
      </SheetTab>
      {tabs.map(([t, w]) => <SheetTab key={t} $w={w}>{t}</SheetTab>)}
      <SheetTab $w={150} $pl={7} $active>Season wise production</SheetTab>
      <SheetTab $w={114} $pl={8}>
        <Svg $c="#777" width="11" height="11" viewBox="0 0 11 11"><path d="M.5.500h10v10H.5zM5.500.500v10M.5 5.500h10" /></Svg>
        Area in acres regi
      </SheetTab>
      <AddTab><NewSheet /></AddTab>
      <AddTab><Grid4 /></AddTab>
      <AddTab><NewStory /></AddTab>
    </TabBar>

    <StatusBar>
      <StatusText>6 marks</StatusText>
      <StatusText $tight>1 row by 1 column</StatusText>
      <StatusText>SUM(zero): 0</StatusText>
      <UserCell $w={127} $pl={5}>
        <UserIcon />hemabharathi r
        <Caret $flat $gap={-1} $s={4} $c="#333" />
      </UserCell>
      <StatusCell $w={27} />
      <StatusCell $w={27} />
      <StatusCell $w={47} />
      <Nav>
        <NavEnd><TriL /></NavEnd>
        <TriL />
        <TriR />
        <NavEnd $right><TriR /></NavEnd>
      </Nav>
      <Views>
        <ViewThumb $c="#c4c4c4" $img={gridDots} $size="4px 4px" />
        <ViewThumb $c="#b5b5b5" $img="linear-gradient(transparent 7px, #f0f0f0 7px)" />
        <ViewThumb $c="#777" />
      </Views>
    </StatusBar>

    <TaskBar>
      <TaskIcon $w={36}><WinLogo /></TaskIcon>
      <TaskIcon $w={36}><Cortana /></TaskIcon>
      <TaskIcon $w={38}><Store /></TaskIcon>
      <TaskIcon $w={38}><Mail /></TaskIcon>
      <TaskApp $w={152} $gap={5}><Edge />public.tableau.com a...</TaskApp>
      <TaskIcon $w={37} $gap={5}><ChromeIcon size={18} /></TaskIcon>
      <TaskIcon $w={37}><Folder /></TaskIcon>
      <TaskApp $w={152} $gap={4} $pl={5} $g={3}><WordIcon />Introduction - Word</TaskApp>
      <TaskApp $w={160} $gap={5} $pl={8} $g={5} $active><Logo size={16} />Tableau - worksheet 1...</TaskApp>
      <TaskApp $w={152} $gap={5}><ChromeIcon />WhatsApp - Google C...</TaskApp>
      <Tray>
        <TrayItem $gap={0}><People /></TrayItem>
        <TrayItem $gap={14}><Up /></TrayItem>
        <TrayItem $gap={11}><Battery /></TrayItem>
        <TrayItem $gap={8}><Wifi /></TrayItem>
        <TrayItem $gap={7}><Speaker /></TrayItem>
        <TrayItem $gap={7}><Cloud /></TrayItem>
        <TrayItem $gap={11}><Stylus /></TrayItem>
        <TrayItem $gap={14}>ENG</TrayItem>
        <TrayItem $gap={10}>12:21</TrayItem>
        <TrayItem $gap={17}><Notif /></TrayItem>
      </Tray>
    </TaskBar>
  </Shell>
);

export default App;
